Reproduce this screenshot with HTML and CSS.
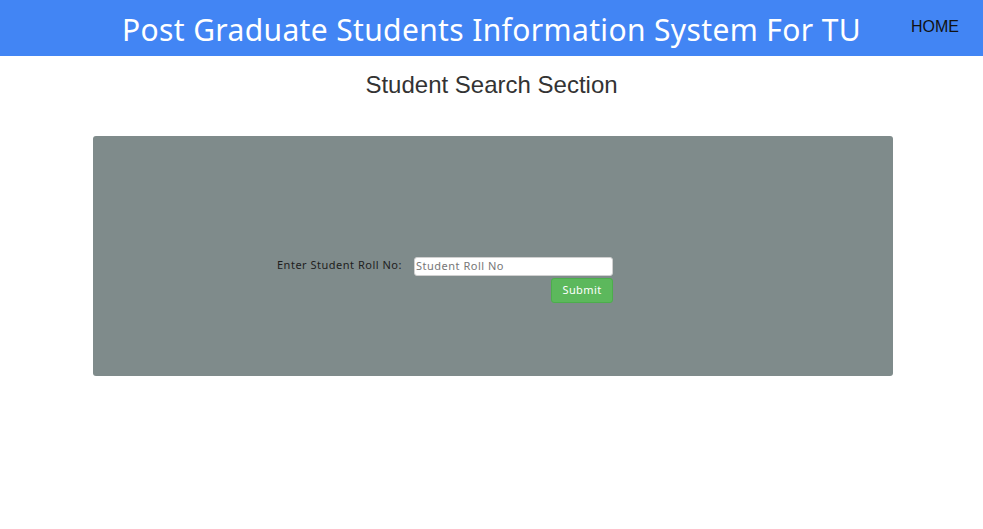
FILE: index.html
```html
<!DOCTYPE html>
<html>
<head>
<meta charset="utf-8">
<title>Student Search</title>
<link rel="stylesheet" href="styles.css">
</head>
<body>
<header class="topbar">
  <div class="topbar-side"></div>
  <h1 class="site-title">Post Graduate Students Information System For TU</h1>
  <nav class="topbar-side topbar-nav"><a href="#" class="nav-link">HOME</a></nav>
</header>
<main class="content">
  <h2 class="section-title">Student Search Section</h2>
  <section class="search-panel">
    <form class="search-form">
      <div class="form-row">
        <label class="form-label" for="roll">Enter Student Roll No:</label>
        <div class="form-field">
          <input id="roll" class="text-input" type="text" placeholder="Student Roll No">
          <button type="button" class="submit-btn">Submit</button>
        </div>
      </div>
    </form>
  </section>
</main>
</body>
</html>
```
FILE: styles.css
```css
* { box-sizing: border-box; }
html, body { margin: 0; padding: 0; background: #ffffff; }
body { font-family: "Noto Sans", "Open Sans", sans-serif; }

.topbar {
  height: 56px;
  background: #4285f4;
  display: grid;
  grid-template-columns: 1fr auto 1fr;
  align-items: center;
}
.site-title {
  margin: 0;
  padding-top: 2px;
  color: #ffffff;
  font-family: "Noto Sans", sans-serif;
  font-weight: 400;
  font-size: 30px;
  letter-spacing: 0.36px;
  white-space: nowrap;
}
.topbar-nav {
  display: flex;
  justify-content: flex-end;
  padding-right: 24px;
  padding-bottom: 3px;
}
.nav-link {
  color: #111111;
  text-decoration: none;
  font-family: "Liberation Sans", Arial, sans-serif;
  font-size: 16px;
}

.content { display: flex; flex-direction: column; align-items: center; }
.section-title {
  margin: 15px 0 0;
  height: 65px;
  font-family: "Liberation Sans", Arial, sans-serif;
  font-weight: 400;
  font-size: 24px;
  color: #333333;
}
.search-panel {
  width: 800px;
  height: 240px;
  margin-left: 3px;
  background: #7f8b8b;
  border-radius: 3px;
  padding: 121px 0 0 184px;
}
.form-row { display: flex; align-items: flex-start; }
.form-label {
  width: 124px;
  height: 19px;
  line-height: 16px;
  margin-right: 13px;
  font-size: 11px;
  letter-spacing: 0.5px;
  color: #1e1e1e;
  white-space: nowrap;
}
.form-field { display: flex; flex-direction: column; align-items: flex-end; width: 199px; }
.text-input {
  width: 199px;
  height: 19px;
  border: 1px solid #d0d0d0;
  border-radius: 3px;
  padding: 0 1px 2px;
  font-family: "Noto Sans", sans-serif;
  font-size: 11px;
  letter-spacing: 0.5px;
  background: #ffffff;
}
.text-input::placeholder { color: #777777; }
.submit-btn {
  margin-top: 2px;
  width: 62px;
  height: 25px;
  border: 1px solid #4cae4c;
  border-radius: 3px;
  background: #5cb85c;
  color: #ffffff;
  font-family: "Noto Sans", sans-serif;
  font-size: 11px;
  letter-spacing: 0.4px;
  padding: 0 0 2px;
}
```
